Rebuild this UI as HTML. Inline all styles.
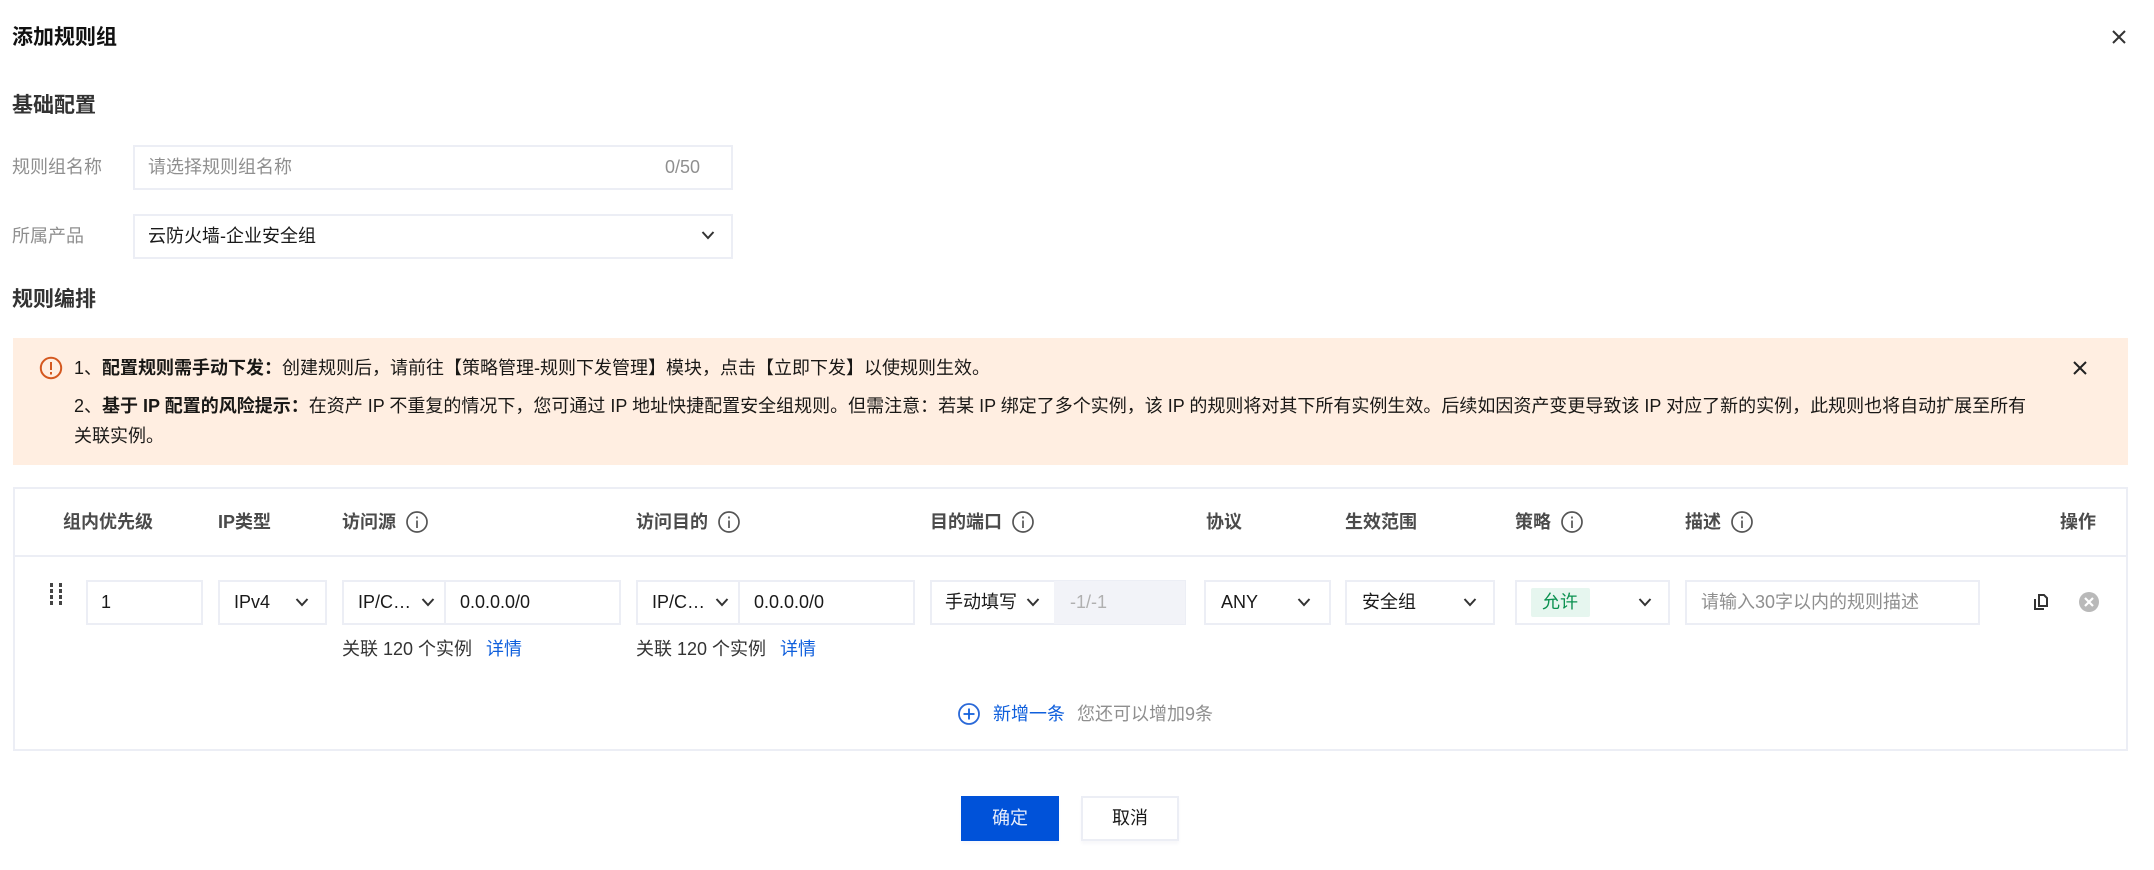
<!DOCTYPE html>
<html lang="zh"><head><meta charset="utf-8"><title>添加规则组</title>
<style>
*{box-sizing:border-box}
html,body{margin:0;padding:0;background:#fff}
body{width:2154px;height:870px;position:relative;overflow:hidden;font-family:"Liberation Sans","Noto Sans CJK SC",sans-serif;font-size:18px;color:rgba(0,0,0,.9)}
.t{position:absolute;white-space:nowrap;line-height:26px;height:26px}
.b{position:absolute;border:2px solid #eceef5;background:#fff}
.h{font-weight:700;font-size:21px;color:#333;line-height:30px;height:30px}
.th{font-weight:700;color:#4b4b4b}
.g{color:#8f8f8f}
.l{color:#0f5fdc}
svg{position:absolute;overflow:visible}
</style></head><body>

<div class="t h" style="left:12px;top:23px;color:#111">添加规则组</div>
<svg style="left:2119px;top:37px" width="1" height="1"><path d="M-6-6 6 6M6-6-6 6" stroke="#333" stroke-width="2" fill="none"/></svg>

<div class="t h" style="left:12px;top:91px">基础配置</div>
<div class="t g" style="left:12px;top:154px">规则组名称</div>
<div class="b" style="left:133px;top:145px;width:600px;height:45px"></div>
<div class="t g" style="left:148px;top:154px">请选择规则组名称</div>
<div class="t g" style="left:665px;top:154px">0/50</div>

<div class="t g" style="left:12px;top:223px">所属产品</div>
<div class="b" style="left:133px;top:214px;width:600px;height:45px"></div>
<div class="t" style="left:148px;top:223px">云防火墙-企业安全组</div>
<svg style="left:708px;top:235px" width="1" height="1"><path d="M-5.500-3 0 3 5.500-3" stroke="#333" stroke-width="2" fill="none"/></svg>

<div class="t h" style="left:12px;top:285px">规则编排</div>

<div style="position:absolute;left:13px;top:338px;width:2115px;height:127px;background:#ffeee1"></div>
<svg style="left:50.500px;top:368px" width="1" height="1"><circle r="10.200" fill="none" stroke="#d4581f" stroke-width="2"/><path d="M0-6V2M0 4V6.500" stroke="#d4581f" stroke-width="2" fill="none"/></svg>
<div class="t" style="left:74px;top:355px">1、<b>配置规则需手动下发：</b>创建规则后，请前往【策略管理-规则下发管理】模块，点击【立即下发】以使规则生效。</div>
<div class="t" style="left:74px;top:393px">2、<b>基于 IP 配置的风险提示：</b>在资产 IP 不重复的情况下，您可通过 IP 地址快捷配置安全组规则。但需注意：若某 IP 绑定了多个实例，该 IP 的规则将对其下所有实例生效。后续如因资产变更导致该 IP 对应了新的实例，此规则也将自动扩展至所有</div>
<div class="t" style="left:74px;top:423px">关联实例。</div>
<svg style="left:2080px;top:368px" width="1" height="1"><path d="M-6-6 6 6M6-6-6 6" stroke="#222" stroke-width="2" fill="none"/></svg>

<!-- table -->
<div class="b" style="left:13px;top:487px;width:2115px;height:264px;background:none"></div>
<div style="position:absolute;left:14px;top:555px;width:2113px;height:2px;background:#eceef5"></div>

<div class="t th" style="left:63px;top:509px">组内优先级</div>
<div class="t th" style="left:218px;top:509px">IP类型</div>
<div class="t th" style="left:342px;top:509px">访问源</div>
<svg style="left:417px;top:522px" width="1" height="1"><circle r="10" fill="none" stroke="#555" stroke-width="1.700"/><path d="M0-5.500V-3.500M0-1.500V6" stroke="#555" stroke-width="1.700" fill="none"/></svg>
<div class="t th" style="left:636px;top:509px">访问目的</div>
<svg style="left:729px;top:522px" width="1" height="1"><circle r="10" fill="none" stroke="#555" stroke-width="1.700"/><path d="M0-5.500V-3.500M0-1.500V6" stroke="#555" stroke-width="1.700" fill="none"/></svg>
<div class="t th" style="left:930px;top:509px">目的端口</div>
<svg style="left:1023px;top:522px" width="1" height="1"><circle r="10" fill="none" stroke="#555" stroke-width="1.700"/><path d="M0-5.500V-3.500M0-1.500V6" stroke="#555" stroke-width="1.700" fill="none"/></svg>
<div class="t th" style="left:1206px;top:509px">协议</div>
<div class="t th" style="left:1345px;top:509px">生效范围</div>
<div class="t th" style="left:1515px;top:509px">策略</div>
<svg style="left:1572px;top:522px" width="1" height="1"><circle r="10" fill="none" stroke="#555" stroke-width="1.700"/><path d="M0-5.500V-3.500M0-1.500V6" stroke="#555" stroke-width="1.700" fill="none"/></svg>
<div class="t th" style="left:1685px;top:509px">描述</div>
<svg style="left:1742px;top:522px" width="1" height="1"><circle r="10" fill="none" stroke="#555" stroke-width="1.700"/><path d="M0-5.500V-3.500M0-1.500V6" stroke="#555" stroke-width="1.700" fill="none"/></svg>
<div class="t th" style="left:2060px;top:509px">操作</div>

<!-- drag -->
<svg style="left:0;top:0" width="1" height="1"><g fill="#444"><rect x="50" y="583" width="3" height="4"/><rect x="59" y="583" width="3" height="4"/><rect x="50" y="589" width="3" height="4"/><rect x="59" y="589" width="3" height="4"/><rect x="50" y="595" width="3" height="4"/><rect x="59" y="595" width="3" height="4"/><rect x="50" y="601" width="3" height="4"/><rect x="59" y="601" width="3" height="4"/></g></svg>

<div class="b" style="left:86px;top:580px;width:117px;height:45px"></div>
<div class="t" style="left:101px;top:589px">1</div>

<div class="b" style="left:218px;top:580px;width:109px;height:45px"></div>
<div class="t" style="left:234px;top:589px">IPv4</div>
<svg style="left:302px;top:602px" width="1" height="1"><path d="M-5.500-3 0 3 5.500-3" stroke="#333" stroke-width="2" fill="none"/></svg>

<div class="b" style="left:342px;top:580px;width:279px;height:45px"></div>
<div style="position:absolute;left:444px;top:581px;width:2px;height:43px;background:#eceef5"></div>
<div class="t" style="left:358px;top:589px">IP/C…</div>
<svg style="left:428px;top:602px" width="1" height="1"><path d="M-5.500-3 0 3 5.500-3" stroke="#333" stroke-width="2" fill="none"/></svg>
<div class="t" style="left:460px;top:589px">0.0.0.0/0</div>
<div class="t" style="left:342px;top:636px;color:#333">关联 120 个实例</div>
<div class="t l" style="left:486px;top:636px">详情</div>

<div class="b" style="left:636px;top:580px;width:279px;height:45px"></div>
<div style="position:absolute;left:738px;top:581px;width:2px;height:43px;background:#eceef5"></div>
<div class="t" style="left:652px;top:589px">IP/C…</div>
<svg style="left:722px;top:602px" width="1" height="1"><path d="M-5.500-3 0 3 5.500-3" stroke="#333" stroke-width="2" fill="none"/></svg>
<div class="t" style="left:754px;top:589px">0.0.0.0/0</div>
<div class="t" style="left:636px;top:636px;color:#333">关联 120 个实例</div>
<div class="t l" style="left:780px;top:636px">详情</div>

<div class="b" style="left:930px;top:580px;width:256px;height:45px"></div>
<div style="position:absolute;left:1054px;top:581px;width:131px;height:43px;background:#f2f3f8"></div>
<div class="t" style="left:945px;top:589px">手动填写</div>
<svg style="left:1033px;top:602px" width="1" height="1"><path d="M-5.500-3 0 3 5.500-3" stroke="#333" stroke-width="2" fill="none"/></svg>
<div class="t" style="left:1070px;top:589px;color:#b0b0b0">-1/-1</div>

<div class="b" style="left:1204px;top:580px;width:127px;height:45px"></div>
<div class="t" style="left:1221px;top:589px">ANY</div>
<svg style="left:1304px;top:602px" width="1" height="1"><path d="M-5.500-3 0 3 5.500-3" stroke="#333" stroke-width="2" fill="none"/></svg>

<div class="b" style="left:1345px;top:580px;width:150px;height:45px"></div>
<div class="t" style="left:1362px;top:589px">安全组</div>
<svg style="left:1470px;top:602px" width="1" height="1"><path d="M-5.500-3 0 3 5.500-3" stroke="#333" stroke-width="2" fill="none"/></svg>

<div class="b" style="left:1515px;top:580px;width:155px;height:45px"></div>
<div style="position:absolute;left:1531px;top:588px;width:59px;height:29px;background:#e6f6ef;border-radius:2px"></div>
<div class="t" style="left:1542px;top:589px;color:#0b9150">允许</div>
<svg style="left:1645px;top:602px" width="1" height="1"><path d="M-5.500-3 0 3 5.500-3" stroke="#333" stroke-width="2" fill="none"/></svg>

<div class="b" style="left:1685px;top:580px;width:295px;height:45px"></div>
<div class="t g" style="left:1701px;top:589px">请输入30字以内的规则描述</div>

<svg style="left:2034px;top:594px" width="14" height="16"><path d="M5 1H10L13 4V12H5Z" fill="#fff" stroke="#333" stroke-width="2"/><path d="M1 5V15H10" fill="none" stroke="#333" stroke-width="2"/></svg>
<svg style="left:2089px;top:602px" width="1" height="1"><circle r="10" fill="#b9b9b9"/><path d="M-4-4 4 4M4-4-4 4" stroke="#fff" stroke-width="2.200" fill="none"/></svg>

<svg style="left:969px;top:714px" width="1" height="1"><circle r="10" fill="none" stroke="#2a69d8" stroke-width="1.800"/><path d="M-5.500 0H5.500M0-5.500V5.500" stroke="#0f5fdc" stroke-width="1.800" fill="none"/></svg>
<div class="t l" style="left:993px;top:701px">新增一条</div>
<div class="t g" style="left:1077px;top:701px">您还可以增加9条</div>

<div style="position:absolute;left:961px;top:796px;width:98px;height:45px;background:#0052d9;color:#e8eefb;text-align:center;line-height:44px;box-shadow:0 3px 3px #f6f8fd">确定</div>
<div class="b" style="left:1081px;top:796px;width:98px;height:45px;text-align:center;line-height:41px;box-shadow:0 3px 3px #f8f8fa">取消</div>
</body></html>
